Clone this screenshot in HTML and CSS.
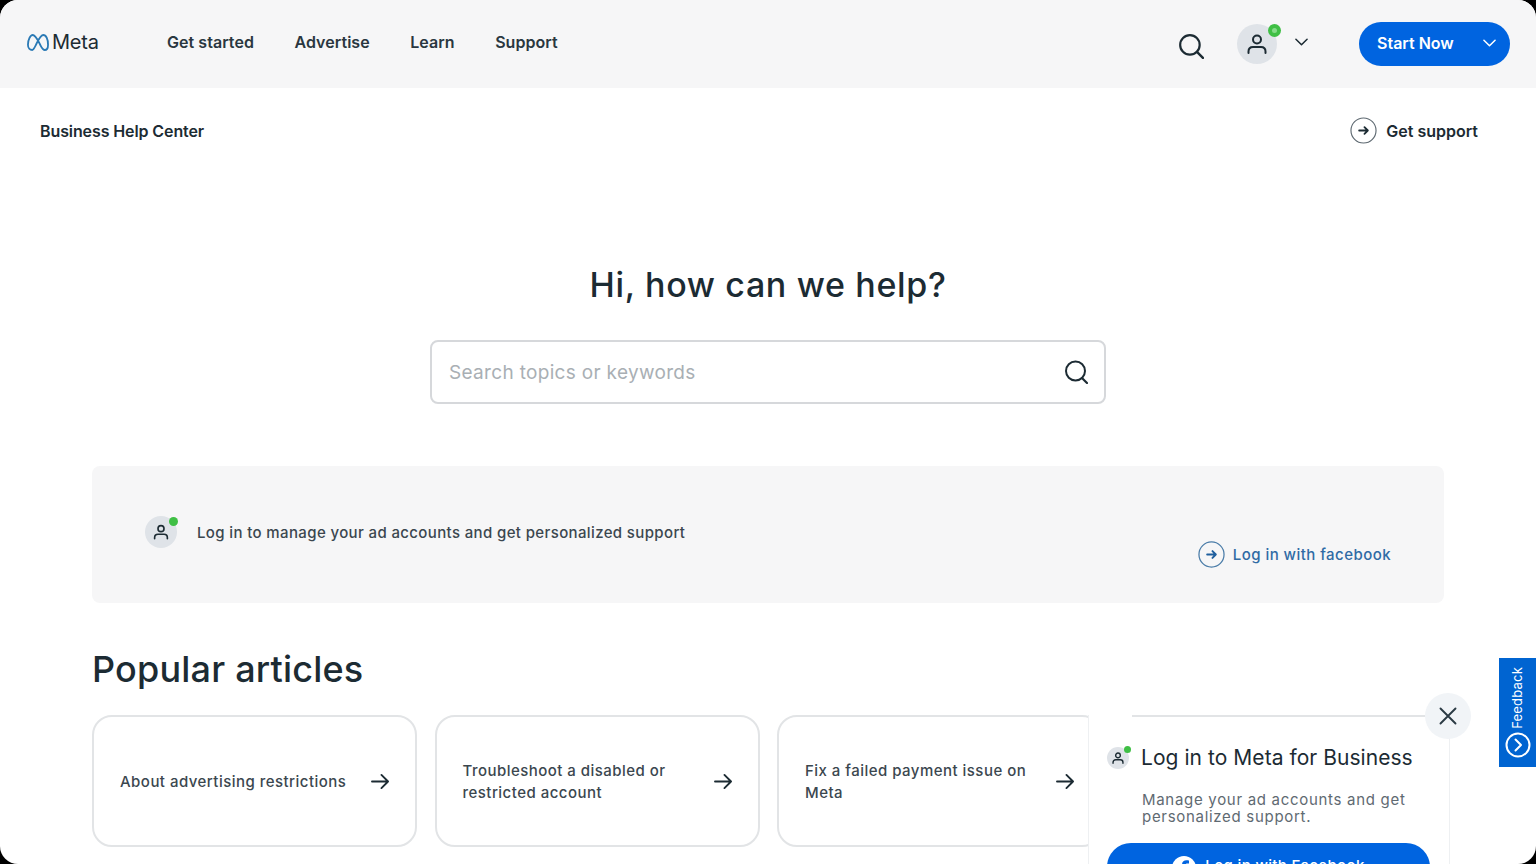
FILE: index.html
```html
<!DOCTYPE html>
<html lang="en">
<head>
<meta charset="utf-8">
<title>Business Help Center</title>
<link rel="stylesheet" href="styles.css">
</head>
<body>
<div class="page">
  <header class="topbar">
    <a class="logo">
      <svg class="logo-mark" viewBox="0 0 23 16" width="22" height="17" preserveAspectRatio="none"><path d="M5.500 15C3 15 1 13 1 10 1 5.500 3.500 1 6 1c3 0 5 4.500 8 9.500 1.500 2.500 3 4.500 4.500 4.500 2 0 3.500-2 3.500-5C22 5 20 1 17 1c-2.500 0-4.500 3.500-7 8-2 3.500-3 6-4.500 6z" fill="none" stroke="#2b7ab5" stroke-width="1.900"/></svg>
      <span class="logo-text">Meta</span>
    </a>
    <nav class="mainnav">
      <a>Get started</a><a>Advertise</a><a>Learn</a><a>Support</a>
    </nav>
    <div class="top-actions">
      <svg class="top-search" viewBox="0 0 24 24" width="26" height="26"><circle cx="11" cy="11" r="9" fill="none" stroke="#1c2b33" stroke-width="2"/><path d="M17.500 17.500L23 23" stroke="#1c2b33" stroke-width="2.200" stroke-linecap="round"/></svg>
      <div class="avatar avatar-lg">
        <svg viewBox="0 0 24 24" width="24" height="24"><circle cx="12" cy="7.500" r="4" fill="none" stroke="#1c2b33" stroke-width="2"/><path d="M3.500 21v-1.500c0-3 2-4.500 4.500-4.500h8c2.500 0 4.500 1.500 4.500 4.500V21" fill="none" stroke="#1c2b33" stroke-width="2" stroke-linecap="round"/></svg>
        <span class="dot dot-lg"></span>
      </div>
      <svg class="chev-dark" viewBox="0 0 14 8" width="13" height="8"><path d="M1 1l6 6 6-6" fill="none" stroke="#1c2b33" stroke-width="1.600" stroke-linecap="round" stroke-linejoin="round"/></svg>
      <a class="start-btn"><span>Start Now</span>
        <svg viewBox="0 0 14 8" width="13" height="8"><path d="M1 1l6 6 6-6" fill="none" stroke="#fff" stroke-width="1.600" stroke-linecap="round" stroke-linejoin="round"/></svg>
      </a>
    </div>
  </header>

  <div class="subbar">
    <a class="subbar-title">Business Help Center</a>
    <a class="support-link">
      <svg viewBox="0 0 28 28" width="27" height="27"><circle cx="14" cy="14" r="13" fill="none" stroke="#5f6a72" stroke-width="1.200"/><path d="M9.500 14h9M15 10.500l3.500 3.500-3.500 3.500" fill="none" stroke="#1c2b33" stroke-width="1.900" stroke-linecap="round" stroke-linejoin="round"/></svg>
      <span>Get support</span>
    </a>
  </div>

  <section class="hero">
    <h1>Hi, how can we help?</h1>
    <div class="searchbox">
      <span class="placeholder">Search topics or keywords</span>
      <svg viewBox="0 0 24 24" width="24" height="24"><circle cx="11.500" cy="11" r="9.500" fill="none" stroke="#1c2b33" stroke-width="2"/><path d="M18 18l5 5" stroke="#1c2b33" stroke-width="2.200" stroke-linecap="round"/></svg>
    </div>
  </section>

  <section class="banner">
    <div class="banner-left">
      <div class="avatar avatar-md">
        <svg viewBox="0 0 24 24" width="18" height="18"><circle cx="12" cy="7.500" r="4" fill="none" stroke="#1c2b33" stroke-width="2.200"/><path d="M3.500 21v-1.500c0-3 2-4.500 4.500-4.500h8c2.500 0 4.500 1.500 4.500 4.500V21" fill="none" stroke="#1c2b33" stroke-width="2.200" stroke-linecap="round"/></svg>
        <span class="dot dot-md"></span>
      </div>
      <p>Log in to manage your ad accounts and get personalized support</p>
    </div>
    <a class="banner-link">
      <svg viewBox="0 0 28 28" width="27" height="27"><circle cx="14" cy="14" r="13" fill="none" stroke="#4a7ca8" stroke-width="1.300"/><path d="M9.500 14h9M15 10.500l3.500 3.500-3.500 3.500" fill="none" stroke="#1f5f9e" stroke-width="2" stroke-linecap="round" stroke-linejoin="round"/></svg>
      <span>Log in with facebook</span>
    </a>
  </section>

  <section class="popular">
    <h2>Popular articles</h2>
    <div class="cards">
      <a class="card"><span>About advertising restrictions</span><svg class="arrow" viewBox="0 0 20 18" width="19" height="17"><path d="M1 9h17M11 2l7 7-7 7" fill="none" stroke="#1c2b33" stroke-width="2" stroke-linecap="round" stroke-linejoin="round"/></svg></a>
      <a class="card"><span>Troubleshoot a disabled or restricted account</span><svg class="arrow" viewBox="0 0 20 18" width="19" height="17"><path d="M1 9h17M11 2l7 7-7 7" fill="none" stroke="#1c2b33" stroke-width="2" stroke-linecap="round" stroke-linejoin="round"/></svg></a>
      <a class="card"><span>Fix a failed payment issue on Meta</span><svg class="arrow" viewBox="0 0 20 18" width="19" height="17"><path d="M1 9h17M11 2l7 7-7 7" fill="none" stroke="#1c2b33" stroke-width="2" stroke-linecap="round" stroke-linejoin="round"/></svg></a>
    </div>
  </section>

  <aside class="popup">
    <div class="popup-head">
      <div class="avatar avatar-sm">
        <svg viewBox="0 0 24 24" width="14" height="14"><circle cx="12" cy="7.500" r="4" fill="none" stroke="#1c2b33" stroke-width="2.400"/><path d="M3.500 21v-1.500c0-3 2-4.500 4.500-4.500h8c2.500 0 4.500 1.500 4.500 4.500V21" fill="none" stroke="#1c2b33" stroke-width="2.400" stroke-linecap="round"/></svg>
        <span class="dot dot-sm"></span>
      </div>
      <h3>Log in to Meta for Business</h3>
    </div>
    <p>Manage your ad accounts and get personalized support.</p>
    <a class="fb-btn">
      <svg viewBox="0 0 24 24" width="24" height="24"><circle cx="12" cy="12" r="12" fill="#fff"/><path d="M13.500 24v-9h3l.5-3.500h-3.500V9.300c0-1 .4-1.700 1.800-1.700H17V4.500c-.4 0-1.400-.2-2.600-.2-2.600 0-4.400 1.600-4.400 4.500v2.700H7V15h3v9z" fill="#0064e0"/></svg>
      <span>Log in with Facebook</span>
    </a>
  </aside>
  <button class="close-btn" aria-label="Close">
    <svg viewBox="0 0 18 18" width="18" height="18"><path d="M1.500 1.500l15 15M16.500 1.500l-15 15" stroke="#2b3a44" stroke-width="1.900" stroke-linecap="round"/></svg>
  </button>

  <a class="feedback">
    <span>Feedback</span>
    <svg viewBox="0 0 26 26" width="26" height="26"><circle cx="13" cy="13" r="11.500" fill="none" stroke="#fff" stroke-width="2"/><path d="M10.500 7.500L16 13l-5.500 5.500" fill="none" stroke="#fff" stroke-width="2" stroke-linecap="round" stroke-linejoin="round"/></svg>
  </a>
</div>
</body>
</html>
```

FILE: styles.css
```css
* { box-sizing: border-box; }
html, body { margin: 0; height: 100%; background: #000; }
body { font-family: "Inter", "Noto Sans", "Liberation Sans", sans-serif; color: #1c2b33; overflow: hidden; }
h1, h2, h3, p { margin: 0; }

.page {
  position: relative;
  width: 1536px;
  height: 864px;
  background: #fff;
  border-radius: 18px;
  overflow: hidden;
}

.topbar {
  height: 88px;
  background: #f6f6f7;
  display: flex;
  align-items: center;
  padding: 0 26px 0 27px;
}
.logo { display: flex; align-items: center; gap: 3px; width: 140px; margin-top: -4px; }
.logo-text { font-size: 20px; font-weight: 400; letter-spacing: -0.2px; color: #1c2b33; }
.mainnav { display: flex; gap: 40.500px; font-size: 16px; font-weight: 600; letter-spacing: 0.05px; color: #2a3740; margin-top: -4px; }
.top-actions { margin-left: auto; display: flex; align-items: center; }
.top-search { margin-top: 3px; margin-right: 33px; }
.avatar {
  position: relative;
  background: #dfe3e8;
  border-radius: 50%;
  display: flex;
  align-items: center;
  justify-content: center;
  flex: none;
}
.avatar-lg { width: 40px; height: 40px; }
.avatar-md { width: 32px; height: 32px; }
.avatar-sm { width: 22px; height: 22px; }
.dot { position: absolute; background: #3fbf45; border-radius: 50%; }
.dot-lg { width: 13px; height: 13px; top: 0; right: -4px; }
.dot-lg::after {
  content: "";
  position: absolute;
  left: 4px;
  top: 4px;
  width: 5px;
  height: 5px;
  border-radius: 50%;
  background: #86dc8a;
}
.dot-md { width: 9px; height: 9px; top: 1px; right: -1px; }
.dot-sm { width: 7px; height: 7px; top: -1px; right: -2px; }
.chev-dark { margin: -4px 0 0 18px; }
.start-btn {
  margin-left: 51px;
  width: 151px;
  height: 44px;
  border-radius: 22px;
  background: #0064e0;
  color: #fff;
  display: flex;
  align-items: center;
  justify-content: space-between;
  padding: 0 14px 2px 18px;
  font-size: 16px;
  font-weight: 600;
}

.subbar {
  height: 87px;
  display: flex;
  align-items: center;
  justify-content: space-between;
  padding: 0 58px 2px 40px;
  font-weight: 600;
  font-size: 16px;
  color: #1c2b33;
}
.subbar-title { letter-spacing: -0.1px; }
.support-link { display: flex; align-items: center; gap: 9px; }

.hero { display: flex; flex-direction: column; align-items: center; padding-top: 88px; }
.hero h1 { font-size: 34px; line-height: 44px; font-weight: 500; letter-spacing: 0.65px; color: #1c2b33; }
.searchbox {
  margin-top: 33px;
  width: 676px;
  height: 64px;
  border: 2px solid #d6d8db;
  border-radius: 8px;
  display: flex;
  align-items: center;
  justify-content: space-between;
  padding: 0 16px 0 17px;
}
.placeholder { font-size: 19px; letter-spacing: 0.32px; color: #a9afb4; }

.banner {
  margin: 62px 92px 0;
  height: 137px;
  background: #f6f6f7;
  border-radius: 8px;
  display: flex;
  justify-content: space-between;
  padding: 0 53px;
}
.banner-left { display: flex; align-items: center; gap: 20px; height: 132px; }
.banner-left p { font-size: 15px; font-weight: 500; letter-spacing: 0.37px; color: #3b474f; }
.banner-link { display: flex; align-items: center; gap: 8px; height: 176px; font-size: 15px; font-weight: 500; letter-spacing: 0.45px; color: #2f6ba5; }

.popular { padding: 44px 92px 0; }
.popular h2 { font-size: 36px; line-height: 44px; font-weight: 500; letter-spacing: 0.2px; color: #1c2b33; }
.cards { display: flex; gap: 17.500px; margin-top: 24px; width: 1400px; }
.card {
  flex: none;
  width: 325px;
  height: 132px;
  border: 2px solid #e2e4e6;
  border-radius: 20px;
  display: flex;
  align-items: center;
  justify-content: space-between;
  padding: 0 25px 0 26px;
  font-size: 15px;
  line-height: 22px;
  font-weight: 500;
  letter-spacing: 0.47px;
  color: #3b474f;
}
.card span { width: 232px; margin-top: 2px; }

.popup {
  position: absolute;
  left: 1089px;
  top: 715px;
  width: 360px;
  height: 160px;
  background: #fff;
  box-shadow: -1px 0 0 #eef0f2, 1px 0 0 #eef0f2;
  padding: 30px 19px 0 18px;
}
.popup::before {
  content: "";
  position: absolute;
  left: 43px;
  right: 0;
  top: 0;
  height: 2px;
  background: #e2e4e6;
}
.popup-head { display: flex; align-items: center; gap: 12px; }
.popup-head h3 { font-size: 21px; font-weight: 400; letter-spacing: 0.05px; color: #1c2b33; }
.popup p { margin: 21px 0 0 35px; font-size: 15px; line-height: 17px; font-weight: 400; letter-spacing: 0.7px; color: #5f6a72; width: 290px; }
.fb-btn {
  margin-top: 18px;
  height: 48px;
  border-radius: 24px;
  background: #0064e0;
  color: #fff;
  display: flex;
  align-items: flex-start;
  justify-content: center;
  gap: 9px;
  padding-top: 13px;
  font-size: 15px;
  font-weight: 500;
  letter-spacing: 0.35px;
}
.close-btn {
  position: absolute;
  left: 1425px;
  top: 693px;
  width: 46px;
  height: 46px;
  border: 0;
  border-radius: 50%;
  background: #f1f4f7;
  display: flex;
  align-items: center;
  justify-content: center;
  padding: 0;
}
.feedback {
  position: absolute;
  left: 1499px;
  top: 658px;
  width: 37px;
  height: 109px;
  background: #0064d1;
  display: flex;
  flex-direction: column;
  align-items: center;
  justify-content: flex-end;
  gap: 3px;
  padding: 0 0 9px 0;
  color: #fff;
  font-size: 13px;
  letter-spacing: 0.2px;
}
.feedback span { writing-mode: vertical-rl; transform: rotate(180deg); margin-right: 2px; }
```
